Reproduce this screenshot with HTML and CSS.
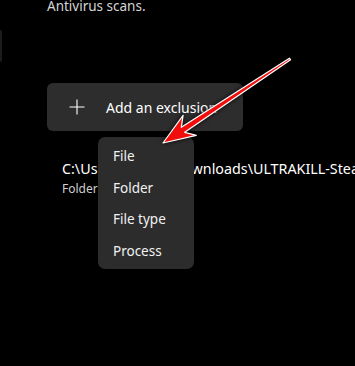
FILE: index.html
```html
<!DOCTYPE html>
<html lang="en">
<head>
  <meta charset="UTF-8" />
  <title>Exclusions</title>
  <link rel="stylesheet" href="styles.css">
</head>
<body>
  <div class="side-edge"></div>

  <div class="page">
    <p class="desc">Antivirus scans.</p>

    <div class="add-wrap">
      <button class="add-btn">
        <svg class="plus" width="16" height="16" viewBox="0 0 16 16">
          <path d="M8 0.5V15.5M0.5 8H15.5" stroke="#fff" stroke-width="1.1" fill="none" />
        </svg>
        <span>Add an exclusion</span>
      </button>

      <ul class="menu">
        <li>File</li>
        <li>Folder</li>
        <li>File type</li>
        <li>Process</li>
      </ul>
    </div>

    <div class="exclusion">
      <div class="path">C:\Users\Admin\Downloads\ULTRAKILL-Steam-Edition</div>
      <div class="kind">Folder</div>
    </div>
  </div>

  <svg class="arrow" width="355" height="366" viewBox="0 0 355 366">
    <polygon points="290.6,59.8 184.7,132.3 196.3,135.3 163,143 183.1,115.3 181.3,127.3 289.4,58.2"
             fill="#f20d0d" stroke="#fff" stroke-width="1.2" stroke-linejoin="round" />
  </svg>
</body>
</html>
```

FILE: styles.css
```css
* {
  box-sizing: border-box;
  margin: 0;
  padding: 0;
}

html, body {
  height: 100%;
}

body {
  font-family: 'Noto Sans', 'Open Sans', sans-serif;
  background-color: #000;
  color: #fff;
  overflow: hidden;
  position: relative;
}

.side-edge {
  position: absolute;
  left: 0;
  top: 30px;
  width: 2px;
  height: 32px;
  background: #1c1c1c;
  border-radius: 0 2px 2px 0;
}

.page {
  padding-left: 47px;
}

.desc {
  font-size: 13.5px;
  line-height: 20px;
  color: #d4d4d4;
  margin-top: -4px;
}

.add-wrap {
  position: relative;
  margin-top: 67px;
}

.add-btn {
  display: flex;
  align-items: center;
  width: 196px;
  height: 48px;
  padding-left: 22px;
  gap: 21px;
  background: #2d2d2d;
  border: none;
  border-radius: 6px;
  color: #fff;
  font-family: inherit;
  font-size: 14px;
  text-align: left;
}

.menu {
  position: absolute;
  left: 51px;
  top: 54px;
  width: 96px;
  list-style: none;
  background: #2c2c2c;
  border-radius: 7px;
  padding: 3px 0;
  z-index: 2;
}

.menu li {
  height: 31.5px;
  line-height: 32px;
  padding-left: 15px;
  font-size: 13.5px;
  color: #f2f2f2;
}

.exclusion {
  margin-top: 28px;
  padding-left: 15px;
  white-space: nowrap;
}

.path {
  font-size: 14.3px;
  line-height: 20px;
  color: #fff;
}

.kind {
  font-size: 12px;
  line-height: 17px;
  color: #cfcfcf;
  margin-top: 1px;
}

.arrow {
  position: absolute;
  left: 0;
  top: 0;
  pointer-events: none;
  z-index: 3;
  filter: drop-shadow(0 0 2px rgba(0, 0, 0, 0.9));
}
```
